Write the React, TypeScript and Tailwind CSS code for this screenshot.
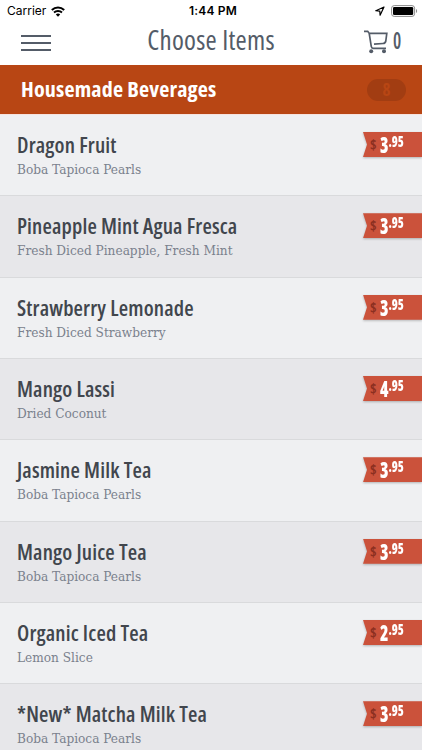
const items = [
  { name: 'Dragon Fruit', detail: 'Boba Tapioca Pearls', dollars: '3' },
  { name: 'Pineapple Mint Agua Fresca', detail: 'Fresh Diced Pineapple, Fresh Mint', dollars: '3' },
  { name: 'Strawberry Lemonade', detail: 'Fresh Diced Strawberry', dollars: '3' },
  { name: 'Mango Lassi', detail: 'Dried Coconut', dollars: '4' },
  { name: 'Jasmine Milk Tea', detail: 'Boba Tapioca Pearls', dollars: '3' },
  { name: 'Mango Juice Tea', detail: 'Boba Tapioca Pearls', dollars: '3' },
  { name: 'Organic Iced Tea', detail: 'Lemon Slice', dollars: '2' },
  { name: '*New* Matcha Milk Tea', detail: 'Boba Tapioca Pearls', dollars: '3' },
];

function StatusBar() {
  return (
    <div className="flex h-[22px] items-center justify-between pl-[7px] pr-[3px] font-['Inter',sans-serif] text-black">
      <div className="flex w-24 items-center gap-[5px] text-[12px]">
        Carrier
        <svg width="14" height="11" viewBox="0 0 14 11" fill="none">
          <path d="M.8 4C4.4.6 9.600.6 13.200 4" stroke="#000" strokeWidth="2" />
          <path d="M3 6.500C5.200 4.400 8.800 4.400 11 6.500" stroke="#000" strokeWidth="1.900" />
          <path d="M7 10.700 4.800 8.400C6 7.300 8 7.300 9.200 8.400Z" fill="#000" />
        </svg>
      </div>
      <div className="text-[12px] font-semibold tracking-[0.2px]">1:44 PM</div>
      <div className="flex w-24 items-center justify-end gap-[5px]">
        <svg className="-translate-x-[2px]" width="10" height="10" viewBox="0 0 10 10" fill="none" stroke="#000" strokeWidth="1.200" strokeLinejoin="round">
          <path d="M9 1 .8 4.700l4 .5.300 4Z" />
        </svg>
        <svg className="-translate-x-px" width="27" height="12" viewBox="0 0 27 12">
          <rect x=".6" y=".6" width="23" height="10.800" rx="2.600" fill="none" stroke="#8b8b8b" />
          <rect x="2" y="2" width="20.200" height="8" rx="1.300" />
          <path d="M25 4v4c1.500-.6 1.500-3.400 0-4" fill="#8b8b8b" />
        </svg>
      </div>
    </div>
  );
}

function NavBar() {
  return (
    <div className="flex h-[43px] items-start justify-between pl-[21px] pr-[21px] text-[#545c68]">
      <div className="mt-[13px] flex w-[60px] flex-col gap-[5px]">
        <span className="h-[2px] w-[30px] bg-[#545c68]" />
        <span className="h-[2px] w-[30px] bg-[#545c68]" />
        <span className="h-[2px] w-[30px] bg-[#545c68]" />
      </div>
      <h1 className="text-[27px] leading-9 tracking-[0.25px] whitespace-nowrap font-stretch-75%">Choose Items</h1>
      <div className="flex w-[60px] justify-end gap-[5px]">
        <svg className="mt-[8px]" width="24" height="24" viewBox="0 0 24 24" fill="none" stroke="#545c68" strokeWidth="1.700">
          <path d="M0 1.300H3.700L5.200 3.300 7.300 16.500Q7.500 18.300 9.300 18.300H22M5.200 3.300H22.800L21.800 11Q21.400 13.400 19 13.500L10 14.200" />
          <circle cx="7.200" cy="21.300" r="2" fill="#545c68" stroke="none" />
          <circle cx="20" cy="21.300" r="2" fill="#545c68" stroke="none" />
        </svg>
        <span className="w-[8px] origin-left scale-x-[0.8] text-[23px] leading-9 font-semibold font-stretch-75%">0</span>
      </div>
    </div>
  );
}

function PriceTag({ dollars }: { dollars: string }) {
  return (
    <div className="mt-[17px] h-[25px] w-[60px] drop-shadow-[0_1px_1px_rgba(0,0,0,0.25)]">
      <div className="flex h-full items-start bg-[#cb523b] pl-[8px] font-bold text-white [clip-path:polygon(1px_0,100%_0,100%_100%,1px_100%,5px_50%)] font-stretch-75%">
        <span className="w-[9.500px] origin-left text-[14px] leading-[26px] text-[#8c2f20]">$</span>
        <span className="flex origin-left scale-x-[0.78] font-extrabold">
          <span className="text-[22px] leading-[24px]">{dollars}</span>
          <span className="text-[15.500px] leading-[18px]">.95</span>
        </span>
      </div>
    </div>
  );
}

export default function App() {
  return (
    <div className="h-[750px] w-[422px] overflow-hidden bg-white font-['Open_Sans',sans-serif]">
      <StatusBar />
      <NavBar />
      <div className="flex h-[50px] items-center justify-between border-b border-[#f6e3de] bg-[#b84614] pl-[21px] pr-[16px]">
        <h2 className="text-[21px] font-bold text-white tracking-[0.15px] whitespace-nowrap font-stretch-75%"><span className="inline-block origin-left scale-x-[1.05]">Housemade Beverages</span></h2>
        <span className="flex h-[22px] w-[39px] items-center justify-center rounded-full bg-[#a23d12] text-[17px] font-bold text-[#b84614] font-stretch-75%">8</span>
      </div>
      <ul>
        {items.map((item) => (
          <li key={item.name} className="flex h-[81.330px] justify-between border-b border-[#d9dadc] bg-[#eff0f2] pl-[17px] even:bg-[#e7e7ea]">
            <div className="pt-[15px] whitespace-nowrap">
              <h3 className="text-[21.500px] leading-[30px] font-semibold tracking-[0.15px] text-[#41464d] font-stretch-75%">{item.name}</h3>
              <p className="text-[13.500px] leading-[18px] text-[#7a818d] font-['DejaVu_Serif_Condensed','DejaVu_Serif',serif]">{item.detail}</p>
            </div>
            <PriceTag dollars={item.dollars} />
          </li>
        ))}
      </ul>
    </div>
  );
}
